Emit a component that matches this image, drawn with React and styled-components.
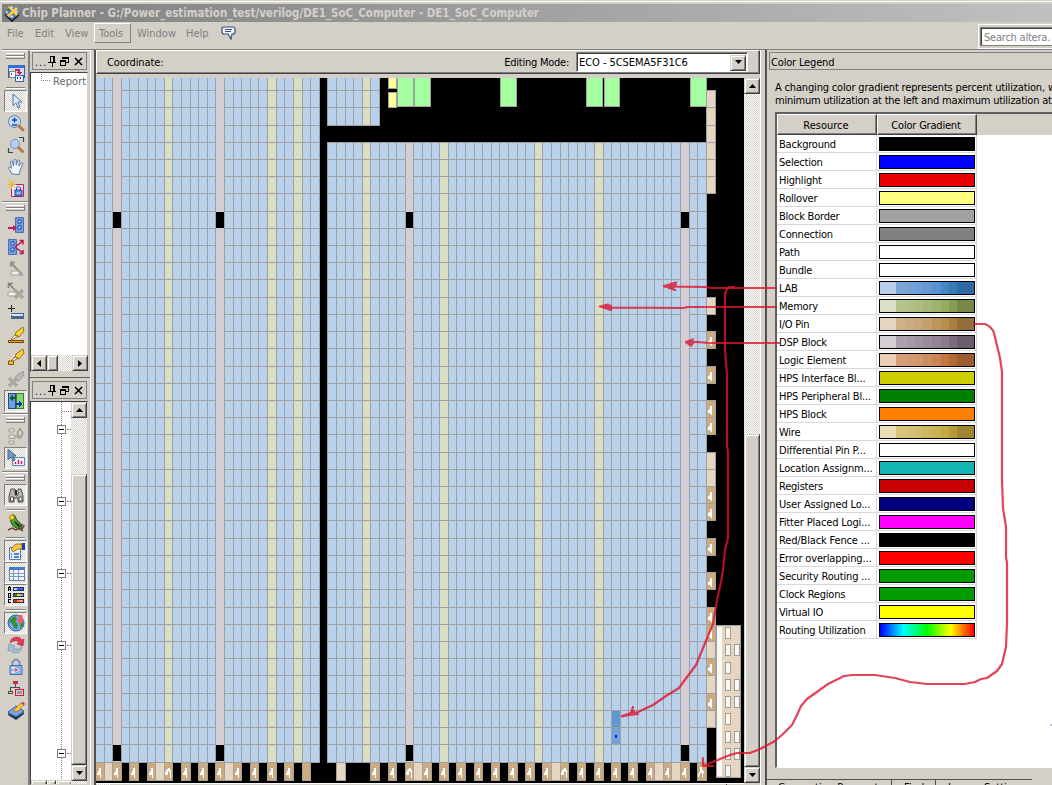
import React from "react";
import styled, { createGlobalStyle, css } from "styled-components";

const Global = createGlobalStyle`
  * { box-sizing: border-box; }
  body { margin: 0; background: #d4d0c8; overflow: hidden; }
`;

const FACE = "#d4d0c8";
const checker = css`
  background: conic-gradient(#fff 25%, ${FACE} 0 50%, #fff 0 75%, ${FACE} 0) 0 0 / 2px 2px;
`;
const raised = css`
  background: ${FACE};
  border: 1px solid;
  border-color: ${FACE} #404040 #404040 ${FACE};
  box-shadow: inset 1px 1px #fff, inset -1px -1px #808080;
`;

const Window = styled.div`
  position: relative;
  width: 1052px;
  height: 785px;
  overflow: hidden;
  display: flex;
  flex-direction: column;
  background: ${FACE};
  font: 11px/14px "DejaVu Sans Condensed", "DejaVu Sans", sans-serif;
  color: #000;
  white-space: nowrap;
`;
const TopEdge = styled.div`
  height: 4px;
  flex: none;
  background: linear-gradient(${FACE} 1px, #fff 1px 2px, ${FACE} 2px);
`;
const TitleBar = styled.div`
  height: 18px;
  flex: none;
  margin-left: 2px;
  padding-left: 2px;
  display: flex;
  align-items: center;
  gap: 2px;
  background: linear-gradient(90deg, #808080, #c0c0c0);
  color: ${FACE};
  font-weight: bold;
  font-size: 11.5px;
`;
const Label = styled.span`
  letter-spacing: ${(p) => p.$ls || 0}px;
  padding-top: ${(p) => p.$drop || 0}px;
  ${(p) => p.$end && "margin-left: auto;"}
`;
const MenuBar = styled.div`
  height: 27px;
  flex: none;
  display: flex;
  align-items: flex-start;
  padding: 1px 0 0 2px;
  color: #808080;
`;
const MenuItem = styled.div`
  width: ${(p) => p.$w}px;
  height: 20px;
  padding-left: 5px;
  line-height: 22px;
  ${(p) => p.$hot && css`
    border: 1px solid;
    border-color: #fff #808080 #808080 #fff;
    padding-left: 4px;
    line-height: 20px;
    margin-right: 1px;
  `}
`;
const HelpBadge = styled.div`
  padding-top: 3px;
  width: 16px;
`;
const SearchFrame = styled.div`
  margin: 1px 0 0 auto;
  width: 74px;
  height: 25px;
  border: 1px solid #fff;
  border-right: 0;
  padding: 2px 0 2px 1px;
`;
const SearchField = styled.div`
  height: 19px;
  background: #fff;
  border: 1px solid #808080;
  border-right: 0;
  box-shadow: inset 1px 1px #404040;
  padding-left: 3px;
  line-height: 20px;
  letter-spacing: -0.22px;
  color: #808080;
`;
const Body = styled.div`
  flex: 1;
  min-height: 0;
  display: flex;
  border-top: 1px solid #808080;
  margin-left: 2px;
`;

/* tool bar */
const ToolColumn = styled.div`
  width: 26px;
  flex: none;
  border-top: 1px solid #fff;
  display: flex;
  flex-direction: column;
`;
const ToolButton = styled.div`
  height: 22px;
  flex: none;
  display: flex;
  align-items: center;
  justify-content: center;
  padding-left: 1px;
  ${(p) => p.$on && css`
    margin: 0 1px 0 2px;
    ${checker}
    border: 1px solid;
    border-color: #808080 #fff #fff #808080;
    padding-left: 0;
  `}
  svg { display: block; }
`;
const Rule = styled.div`
  height: ${(p) => p.$h}px;
  flex: none;
  padding-top: ${(p) => p.$top}px;
  &::before {
    content: "";
    display: block;
    height: 2px;
    margin: 0 ${(p) => (p.$wide ? 0 : "3px")} 0 ${(p) => (p.$wide ? 0 : "4px")};
    background: linear-gradient(#808080 50%, #fff 50%);
  }
`;
const Grip = styled.div`
  height: ${(p) => p.$h}px;
  flex: none;
  padding: ${(p) => p.$top}px 3px 0 4px;
  &::before {
    content: "";
    display: block;
    height: 6px;
    background: linear-gradient(#fff 1px, ${FACE} 1px 2px, #808080 2px 3px, #fff 3px 4px, ${FACE} 4px 5px, #808080 5px);
    border-right: 1px solid #808080;
  }
`;

/* docks on the left */
const DockColumn = styled.div`
  width: 62px;
  flex: none;
  display: flex;
  flex-direction: column;
`;
const Dock = styled.div`
  height: ${(p) => p.$h}px;
  flex: none;
  border-left: 2px solid #808080;
  border-top: 1px solid ${(p) => (p.$line ? "#606060" : "#fff")};
  display: flex;
  flex-direction: column;
  padding-top: ${(p) => p.$pt}px;
`;
const DockTitle = styled.div`
  height: 18px;
  flex: none;
  margin: 0 3px 0 2px;
  border: 1px solid #808080;
  display: flex;
  align-items: center;
  padding-left: 2px;
  svg { display: block; }
`;
const Ellipsis = styled.span`
  width: 13px;
  padding-top: 4px;
  letter-spacing: 0.8px;
  color: #201040;
`;
const DockBox = styled.div`
  flex: 1;
  min-height: 0;
  margin: ${(p) => p.$mt}px 2px ${(p) => p.$mb}px 0;
  background: #fff;
  border: 1px solid #404040;
  border-right-color: ${FACE};
  border-bottom-color: ${FACE};
  display: flex;
  flex-direction: ${(p) => p.$dir || "column"};
`;
const ReportRow = styled.div`
  flex: 1;
  display: flex;
  padding-left: 10px;
  color: #666;
  span { margin: 2px 0 0 3px; letter-spacing: 0.1px; }
`;
const ReportBranch = styled.i`
  width: 9px;
  height: 7px;
  margin-top: 1px;
  border-left: 1px dotted #909090;
  border-bottom: 1px dotted #909090;
`;
const Tree = styled.div`
  flex: 1;
  overflow: hidden;
  display: flex;
  flex-direction: column;
`;
const TreeRow = styled.div`
  height: 18px;
  flex: none;
  display: flex;
  align-items: center;
  padding-left: ${(p) => (p.$node ? 26 : 30)}px;
  background: repeating-linear-gradient(#808080 0 1px, #fff 1px 2px) 30px 0 / 1px 100% no-repeat;
  &::after {
    content: "";
    display: ${(p) => (p.$node || p.$first ? "block" : "none")};
    width: ${(p) => (p.$first ? 9 : 4)}px;
    margin-left: 1px;
    border-top: 1px dotted #808080;
  }
`;
const Toggle = styled.i`
  width: 9px;
  height: 9px;
  border: 1px solid #808080;
  background: linear-gradient(#000, #000) 1px 3px / 5px 1px no-repeat #fff;
`;
const ScrollV = styled.div`
  width: 16px;
  flex: none;
  display: flex;
  flex-direction: column;
  ${checker}
`;
const ScrollH = styled.div`
  height: 16px;
  flex: none;
  display: flex;
  ${checker}
`;
const ScrollPiece = styled.div`
  ${raised}
  flex: none;
  width: ${(p) => (p.$w ? p.$w + "px" : "auto")};
  height: ${(p) => (p.$h ? p.$h + "px" : "auto")};
  margin-top: ${(p) => p.$mt || 0}px;
  margin-left: ${(p) => (p.$end ? "auto" : (p.$ml || 0) + "px")};
  display: flex;
  align-items: center;
  justify-content: center;
`;
const BottomScroll = styled.div`
  height: 4px;
  flex: none;
  display: flex;
  gap: 1px;
  background: #fff;
  overflow: hidden;
`;

/* centre */
const Center = styled.div`
  width: 671px;
  flex: none;
  display: flex;
  flex-direction: column;
  border: solid #fff;
  border-width: 0 1px;
  padding-left: 3px;
`;
const CenterInner = styled.div`
  flex: 1;
  min-height: 0;
  border-left: 2px solid #505050;
  display: flex;
  flex-direction: column;
`;
const CoordBar = styled.div`
  height: 24px;
  flex: none;
  width: 664px;
  border: 1px solid;
  border-color: #fff #404040 #404040 #fff;
  box-shadow: inset -1px -1px #808080;
  display: flex;
  align-items: center;
  padding-left: 10px;
`;
const Combo = styled.div`
  margin: 0 11px 0 7px;
  width: 172px;
  height: 20px;
  background: #fff;
  border: 1px solid;
  border-color: #808080 #fff #fff #808080;
  box-shadow: inset 1px 1px #404040;
  display: flex;
  align-items: center;
  padding: 1px 1px 0 2px;
`;
const MapRow = styled.div`
  margin-top: 4px;
  flex: none;
  display: flex;
  height: 705px;
  width: 664px;
  svg { display: block; }
`;
const MapBottom = styled.div`
  flex: 1;
  width: 648px;
  display: flex;
  border-top: 1px solid #fff;
  i { width: 15px; ${checker} }
  b { width: 616px; border-right: 1px solid #404040; }
`;

/* legend */
const Legend = styled.div`
  flex: 1;
  min-width: 0;
  border-left: 2px solid #505050;
  margin-left: 4px;
  padding-top: 2px;
  display: flex;
  flex-direction: column;
`;
const LegendTitle = styled.div`
  height: 18px;
  flex: none;
  margin-left: 2px;
  border: 1px solid #808080;
  border-right: 0;
  padding-left: 1px;
  line-height: 19px;
  letter-spacing: -0.17px;
`;
const LegendText = styled.div`
  margin: 11px 0 0 8px;
  line-height: 13px;
  height: 31px;
  flex: none;
`;
const LegendView = styled.div`
  height: 656px;
  flex: none;
  margin-left: 8px;
  background: #fff;
  border: solid #606060;
  border-width: 2px 0 0 2px;
  border-bottom: 1px solid #fff;
`;
const HeadRow = styled.div`
  display: flex;
  height: 21px;
  background: ${FACE};
`;
const HeadCell = styled.div`
  width: ${(p) => p.$w}px;
  padding-right: 2px;
  text-align: center;
  line-height: 21px;
  letter-spacing: ${(p) => p.$ls || 0}px;
  border: 1px solid;
  border-color: #fff #404040 #404040 #fff;
  box-shadow: inset -1px -1px #808080;
`;
const LegendRow = styled.div`
  width: 200px;
  height: 18px;
  display: flex;
  border-bottom: 1px solid #d8d8d8;
  border-right: 1px solid #d8d8d8;
`;
const NameCell = styled.div`
  width: 100px;
  padding-left: 2px;
  line-height: 19px;
  letter-spacing: ${(p) => (p.$long ? -0.15 : -0.22)}px;
  border-right: 1px solid #d8d8d8;
`;
const Swatch = styled.div`
  width: 96px;
  height: 14px;
  margin: 2px 0 0 2px;
  border: 1px solid #000;
  background: ${(p) => p.$bg};
`;
const TabStrip = styled.div`
  margin-top: 11px;
  width: 265px;
  height: 8px;
  flex: none;
  border-top: 1px solid #505050;
  display: flex;
  gap: 1px;
  overflow: hidden;
`;
const Tab = styled.div`
  width: ${(p) => p.$w}px;
  flex: none;
  border-right: 1px solid #505050;
  padding: 1px 0 0 11px;
`;
const Overlay = styled.svg`
  position: absolute;
  left: 0;
  top: 0;
  pointer-events: none;
`;

/* ---- chip map geometry ---- */
const colX = (k) => Math.floor(95.58 + 8.601 * k) - 96;
const steps18 = new Set([1, 6, 11, 15, 20, 25, 29, 34, 38]);
const rowY = [12];
for (let i = 0; i < 40; i++) rowY.push(rowY[i] + 17 + (steps18.has(i) || i === 39 ? 1 : 0));
const MEM = [8, 20, 23, 31, 40, 51, 58];
const DSP = [2, 14, 36, 68];
const PALE = [1, 7, 15, 28, 37, 53, 65, 67];
const PINS = [0, 2, 4, 6, 8, 10, 12, 14, 16, 18, 20, 22, 24, 32, 34, 36, 38, 40, 42, 44, 46, 48, 50, 52, 54, 56, 58, 60, 62, 64, 66, 68, 70];
const SIDE = { 0: 0, 1: 0, 2: 0, 3: 0, 4: 0, 5: 0, 12: 0, 14: 1, 16: 1, 18: 1, 19: 1, 21: 0, 22: 0, 23: 1, 24: 1, 26: 1, 28: 1, 30: 1, 31: 1, 32: 0, 33: 1, 34: 0, 35: 1, 36: 0 };
const PADS = [[627, 1], [644, 2], [662, 1], [679, 2], [696, 2], [713, 1], [731, 2], [748, 2], [765, 1]];
const C = { lab: "#bad1eb", mem: "#d9dfc5", dsp: "#d4cdd4", pale: "#e6d5c0", tan: "#ccab80", line: "#a0a0a0" };

function ChipMap() {
  const out = [];
  const bottom = rowY[39];
  const R = (x, y, w, h, fill, key) => out.push(<rect key={key || out.length} x={x} y={y} width={w} height={h} fill={fill} />);
  R(0, 0, 648, 705, "#000");
  for (let k = 0; k < 71; k++) {
    if (k === 26) continue;
    const x = colX(k);
    const w = colX(k + 1) - x;
    const kind = MEM.includes(k) ? "mem" : DSP.includes(k) ? "dsp" : "lab";
    const top = k < 26 ? 0 : rowY[3];
    const end = bottom + 1;
    R(x, top, w + 1, end - top, C.line);
    R(x + 1, top + (k > 26 ? 1 : 0), w - 1, bottom - top - (k > 26 ? 1 : 0), C[kind]);
    if (k > 26 && k < 33) {
      R(x, 0, w + 1, rowY[2] + 1, C.line);
      R(x + 1, 0, w - 1, rowY[2], C[kind]);
      if (kind !== "dsp") { R(x, rowY[0], w, 1, C.line); R(x, rowY[1], w, 1, C.line); }
    }
    if (kind !== "dsp") {
      rowY.slice(k < 26 ? 0 : 3, 40).forEach((y) => R(x, y, w, 1, C.line));
    } else {
      R(x + 1, rowY[7] + 1, w - 1, 16, "#000");
      R(x + 1, rowY[38] + 1, w - 1, 16, "#000");
    }
  }
  [[292, 0, 9, 11], [292, 14, 9, 16]].forEach(([x, y, w, h]) => {
    R(x, y, w, h, C.line);
    R(x + 1, y ? y + 1 : 0, w - 2, h - (y ? 2 : 1), "#ffff9c");
  });
  [[301, 17], [318, 17], [404, 17], [490, 17], [508, 16], [594, 17]].forEach(([x, w]) => {
    R(x, 0, w, 29, C.line);
    R(x + 1, 0, w - 2, 28, "#a5ff9e");
  });
  Object.entries(SIDE).forEach(([r, tan]) => {
    const y = rowY[+r];
    const h = rowY[+r + 1] - y;
    R(610, y, 10, h + 1, C.line);
    R(611, y + 1, 8, h - 1, tan ? C.tan : C.pale);
    if (tan) out.push(<path key={"s" + r} d={`M${614} ${y + 6}h2v9h-1v-1h-1v-1h-2v-3h1v-1h1z`} fill="#fff" />);
  });
  PALE.forEach((k) => {
    R(colX(k), bottom, colX(k + 1) - colX(k) + 1, 19, C.line);
    R(colX(k) + 1, bottom + 1, colX(k + 1) - colX(k) - 1, 17, C.pale);
  });
  PINS.forEach((k) => {
    const x = colX(k);
    R(x, bottom, colX(k + 1) - x + 1, 19, C.line);
    R(x + 1, bottom + 1, colX(k + 1) - x - 1, 17, C.tan);
    if (k === 24) return;
    const d = [8, 36, 54].includes(k)
      ? `M${x + 3} ${bottom + 7}h1v-1h2v2h1v8h-1v-6h-1v-1h-1v4h-3v-3h1z`
      : k === 70
        ? `M${x + 3} ${bottom + 5}h2v3h1v1h1v2h-1v4h-1v-4h-2v2h-1v2h-1v-3h1v-2h1z`
        : `M${x + 4} ${bottom + 6}h2v10h-1v-3h-3v-2h1v-2h1z`;
    out.push(<path key={"p" + k} d={d} fill="#fff" />);
  });
  R(colX(60) + 1, rowY[36] + 1, 8, 16, "#6097d1");
  R(colX(60) + 1, rowY[37] + 1, 8, 16, "#72a3da");
  R(519, 657, 2, 3, "#0020ff");
  R(620, 547, 25, 153, C.line);
  R(621, 548, 23, 151, C.pale);
  R(621, 549, 5, 149, "#fbf9f6");
  PADS.forEach(([y, n]) => {
    for (let i = 0; i < n; i++) {
      R(629 + i * 9, y - 78, 6, 12, "#a09c98");
      R(630 + i * 9, y - 77, 4, 10, "#faf6f2");
    }
  });
  return <svg width="648" height="705" shapeRendering="crispEdges">{out}</svg>;
}

/* ---- icons ---- */
const Ico = ({ children, s = 18, crisp }) => (
  <svg width={s} height={s} viewBox="0 0 18 18" fill="none" shapeRendering={crisp ? "crispEdges" : "auto"}>{children}</svg>
);
const Pencil = ({ gray }) => (
  <>
    <path d="M16 1L9 6l-1 4 4 1 5-6z" fill={gray ? "#bbb" : "#f8d040"} stroke={gray ? "#999" : "#9a7010"} />
    <path d="M8 9l-4 4 1 1 6-4z" fill={gray ? "#c8c8c8" : "#fff8c8"} stroke={gray ? "#999" : "#604000"} strokeWidth=".7" />
  </>
);
const icons = {
  locate: <Ico crisp><path d="M1 1h16v12H1z" fill="#c8dcf8" stroke="#3860b0" /><path d="M1 1h16v3H1z" fill="#3870d0" /><path d="M2 7h6v6H2z" fill="#fff" stroke="#888" /><path d="M8 11h8v6H8z" fill="#e8f0ff" stroke="#4060a0" /><path d="M8 5h5v3h3l-4 3-3-3h2V7H8z" fill="#d0204c" /><path d="M4 9h1v2H4zM10 13h1v2h-1zM13 13h1v2h-1z" fill="#205080" /></Ico>,
  pointer: <Ico><path d="M6 2v12l3-3 2 5 2-1-2-5h4z" fill="#dce8fa" stroke="#5070a0" /></Ico>,
  zoom: <Ico><circle cx="7.5" cy="7.5" r="6" fill="#c4dcf8" stroke="#6080b0" /><path d="M12 12l4 4" stroke="#b87840" strokeWidth="3" strokeLinecap="round" /><path d="M5 6h5M7.500 3.500v5M5 11h5" stroke="#1848a0" strokeWidth="1.300" /></Ico>,
  fit: <Ico><circle cx="8" cy="8" r="4.500" fill="#b4d0f4" stroke="#7090b8" /><path d="M11.500 11.500l4 4" stroke="#b87840" strokeWidth="3" strokeLinecap="round" /><path d="M12 1.500h4.500V6M1.500 12v4.500H6" stroke="#304860" strokeWidth="1.200" /></Ico>,
  hand: <Ico><path d="M5 16L1.500 10c0-1.500 1.500-1.500 3 .5L3.500 4c.2-1.500 1.600-1.300 2 0L6.500 8 7 2c.5-1.300 2-1.200 2.200 0v5l1.500-4.500c.6-1 1.900-.7 1.800.5L11.800 8l2.400-3c1-.8 2 0 1.500 1L13 13l-1 3.500z" fill="#f0f5ff" stroke="#6078a8" /></Ico>,
  newLock: <Ico><path d="M4.500 4.500h12v12h-12z" fill="#e8dff2" stroke="#d01850" /><path d="M8 10h7v6H8z" fill="#5888d8" stroke="#2850a0" /><path d="M9.500 10V7.500q2-2 4 0V10" stroke="#2850a0" /><path d="M9.500 13h4" stroke="#e8eefc" /><path d="M4.500 0v9M0 4.500h9M1 1l7 7M8 1L1 8" stroke="#f0b818" strokeWidth=".9" /></Ico>,
  fanin: <Ico><path d="M8.500 1.500h8v15h-8z" fill="#6c9ce4" stroke="#5070b0" /><path d="M11 4h3v3h-3zM11 10h3v3h-3z" fill="#d8e8ff" stroke="#1840a0" /><path d="M1 12h6" stroke="#c8184c" strokeWidth="2" /><path d="M6 9l4 3-4 3z" fill="#c8184c" /></Ico>,
  fanout: <Ico><path d="M1.500 1.500h8v15h-8z" fill="#6c9ce4" stroke="#5070b0" /><path d="M4 4h3v3H4zM4 10h3v3H4z" fill="#d8e8ff" stroke="#1840a0" /><path d="M8 9l8-6M8 9l8 6M12.500 2.500H16v4M12.500 15.500H16V12" stroke="#b8184c" strokeWidth="1.500" /></Ico>,
  grayArrow: <Ico><path d="M4 3l11 11M4 6.500V2.500H8" stroke="#909088" strokeWidth="1.800" /><path d="M4 11h9v4H4z" fill="#f0f0ec" stroke="#a0a098" /><path d="M11 9l6 7h-5z" fill="#a8a8a0" /></Ico>,
  grayCut: <Ico><path d="M2 2l8 8M1.500 6V1.500H6" stroke="#808078" strokeWidth="1.500" /><path d="M1 10h8v4H1z" fill="#f0f0ec" stroke="#a0a098" /><path d="M8 8l8 8M16 8l-8 8" stroke="#a8a8a0" strokeWidth="3.500" /></Ico>,
  add: <Ico crisp><path d="M1 4.500h7M4.500 1v7" stroke="#202830" /><path d="M4 9h13v6H4z" fill="#486890" /><path d="M4 10h12v2H5z" fill="#d4e4f4" /></Ico>,
  pencilLine: <Ico><Pencil /><path d="M1.500 14.500h15v2h-15z" fill="#f0b020" stroke="#704000" /></Ico>,
  pencilBox: <Ico><Pencil /><path d="M1.500 13h5v3.500h-5z" fill="#f8c830" stroke="#805000" /></Ico>,
  pencilGray: <Ico><Pencil gray /><path d="M2 8l8 8M10 8l-8 8" stroke="#a8a8a0" strokeWidth="3.500" /></Ico>,
  swap: <Ico crisp><path d="M1.500 1.500h7v15h-7z" fill="#68a0ec" stroke="#304880" /><path d="M9.500 1.500h7v15h-7z" fill="#90d078" stroke="#308030" /><path d="M2 6l4-3v2h3v2H6v2z" fill="#086020" /><path d="M16 12l-4-3v2H9v2h3v2z" fill="#1030b0" /></Ico>,
  grayBlocks: <Ico><path d="M2 2h5v3H2zM2 8h6v3.500H2zM2 14h5v3H2zM7 9.500h3" stroke="#a0a098" fill="#e0e0dc" /><path d="M13 1l3 5-2 5h-3l-1-5z" fill="#b0b0a8" stroke="#909088" /><path d="M13 4v4" stroke="#fff" /></Ico>,
  chart: <Ico><path d="M5.500 8.500h12v8h-12z" fill="#e8f0ff" stroke="#6888b8" /><path d="M8.500 13v2M11.500 11v4M14.500 12v3" stroke="#d01850" strokeWidth="1.400" /><path d="M1 0v11l3-3 2 4 2-1-2-4h3z" fill="#7098c8" stroke="#486890" /></Ico>,
  binoc: <Ico><path d="M4 3h4v5l1 2h1l1-2V3h3l2 7v6h-5v-4H7v4H2v-6z" fill="#b8b8b0" stroke="#505050" /><path d="M3.500 11h3v4h-3zM12 11h3v4h-3z" fill="#f0f0ec" stroke="#505050" /><path d="M8 4h2v5H8z" fill="#303030" /></Ico>,
  parrot: <Ico><path d="M3 3q1-3 4-2 2 1 2 4l5 5 1 6-4-1-5-3-2-4z" fill="#50a030" stroke="#205020" /><path d="M2 4q1-4 4-3 2 1 1 4-3 2-4 0z" fill="#f8d020" stroke="#907010" strokeWidth=".6" /><path d="M8 8l5 5" stroke="#104018" strokeWidth="2" /><path d="M1 16l4-2 4 2 3-2 4 3M13 10l4 2-2 3" stroke="#704838" strokeWidth="1.500" /></Ico>,
  props: <Ico><path d="M2.500 5.500h11v12h-11z" fill="#e8f2ff" stroke="#5078b8" /><path d="M7 12h5M7 15h5M4 12h1M4 15h1" stroke="#2858c0" strokeWidth="1.300" /><path d="M4 7l5-5h6v5h-4l-5 3z" fill="#f4c840" stroke="#906000" strokeWidth=".8" /><path d="M15 1h3v7h-3z" fill="#1840c0" /></Ico>,
  table: <Ico crisp><path d="M2 3h15v13H2z" fill="#f4f8ff" stroke="#6880a8" /><path d="M2 3h15v3H2z" fill="#4878c8" /><path d="M2 9h15M2 12h15M6 6v10M11 6v10" stroke="#7898c8" /></Ico>,
  legend: <Ico crisp><path d="M1.500 5V2l1-1 1 1v3M1.500 3.500h2M1.500 7h2v4h-2zM4 13.500H1.500v3H4" stroke="#000" /><path d="M6.500 1.500h10v3h-10z" fill="#3868d0" stroke="#203060" /><path d="M7 2h3v2H7z" fill="#b8d0f8" /><path d="M6.500 7.500h10v3h-10z" fill="#e8e040" stroke="#303030" /><path d="M7 8h3v2H7z" fill="#308020" /><path d="M13 8h3v2h-3z" fill="#b090e0" /><path d="M6.500 13.500h10v3h-10z" fill="#f09030" stroke="#303030" /><path d="M7 14h3v2H7z" fill="#e02020" /><path d="M13 14h3v2h-3z" fill="#f4a0b0" /></Ico>,
  globe: <Ico><circle cx="9" cy="9" r="8" fill="#70a4ec" stroke="#3060a8" /><path d="M3 5l5-3 2 3-2 3 3 2-1 5-3-1-2-5-3-1zM13 9l3-1v4l-3 2z" fill="#389030" /><path d="M11.500 1h4v5h2L13.500 10l-4-4h2z" fill="#f06060" /></Ico>,
  refresh: <Ico><path d="M3 7q1-6 7-6 3 0 5 3l2-1-1 7-6-2 2-2q-4-3-9 1z" fill="#e03858" stroke="#a82848" strokeWidth=".6" /><path d="M15 11q-1 6-7 6-3 0-5-3l-2 1 1-7 6 2-2 2q4 3 9-1z" fill="#a4bcd8" stroke="#6888a8" strokeWidth=".6" /></Ico>,
  lock: <Ico><path d="M5.500 8V4q3.500-5 7 0v4" stroke="#7890b8" strokeWidth="1.800" /><path d="M3 7.500h12v9H3z" fill="#8cb4ec" stroke="#4870b0" /><path d="M4 10h4M4 14h4" stroke="#fff" /><path d="M6 9l6 3-6 3 2-3z" stroke="#fff" strokeWidth=".8" fill="#c81848" /></Ico>,
  hier: <Ico crisp><path d="M8.500 4v3M3.500 11V7.500h9V9" stroke="#405060" /><path d="M6 1h5v3H6z" fill="#d02850" /><path d="M1 11h5v3H1z" fill="#405040" /><path d="M2 12h3v1H2z" fill="#e8e070" /><path d="M8.500 9.500h8v6h-8z" stroke="#e01040" /><path d="M10 11h5v3h-5z" fill="#88a0b0" /></Ico>,
  chipEdit: <Ico><path d="M1 10l8-6 8 5-8 6z" fill="#78a4e4" stroke="#3860a8" /><path d="M1 11l8 4 8-5v2l-8 6-8-5z" fill="#203858" /><path d="M7 10l1-3 6-6 3 2-6 6z" fill="#f8c830" stroke="#b07010" strokeWidth=".7" /><path d="M14 1l2-1 2 2-1 1z" fill="#d02850" /></Ico>,
};
const Pin = () => <svg width="8" height="11" shapeRendering="crispEdges"><path d="M2.500 0.500h3v6h-3zM5 0h1v6H5z" fill="none" stroke="#000" /><path d="M0 6.500h8M4.500 7v4" stroke="#000" /></svg>;
const Restore = () => <svg width="9" height="9" shapeRendering="crispEdges"><path d="M2.500 2V.5h6v5H6M.5 3.500h5v5h-5zM.5 4.500h5M2.500 1.500h6" fill="none" stroke="#000" /></svg>;
const Close = () => <svg width="9" height="9"><path d="M1 1l7 7M8 1L1 8" stroke="#000" strokeWidth="1.500" /></svg>;
const Arrow = ({ d }) => {
  const p = { up: "M0 4h7L3.500 0z", down: "M0 0h7L3.500 4z", left: "M4 0v7L0 3.500z", right: "M0 0v7l4-3.500z" }[d];
  return <svg width="7" height="7" viewBox={d === "up" || d === "down" ? "0 -1 7 7" : "-1 0 7 7"}><path d={p} /></svg>;
};
const DockHead = () => (
  <DockTitle>
    <Ellipsis>...</Ellipsis><Pin /><svg width="4" height="1" /><Restore /><svg width="5" height="1" /><Close />
  </DockTitle>
);
const AppIcon = () => (
  <svg width="16" height="17" viewBox="0 0 16 17"><path d="M0 8l8-7 8 7-8 8z" fill="#506898" /><path d="M0 9l8 7 8-7-8 8z" fill="#101820" /><path d="M4 2l8 9 2-2L6 1zM12 2L2 11l2 2L14 4z" fill="#f8d040" /><path d="M2 6.500l2 1.500M11 5.500l3 2M6.500 12l3-1M7 2l2 1" stroke="#c8d8f8" strokeWidth="2" /><path d="M1 10l7 6 7-6" stroke="#182030" strokeWidth="1.500" fill="none" /></svg>
);
const Bubble = () => (
  <svg width="15" height="14" viewBox="0 0 15 14"><path d="M3 1h9q2 0 2 2v3q0 2-2 2h-1l-1 5-3-5H3Q1 8 1 6V3q0-2 2-2z" fill="#f4f8ff" stroke="#305078" strokeWidth="1.200" /><path d="M4 3.500h7M4 5.500h6" stroke="#305078" /></svg>
);

const shades = (c) => {
  const w = [16, 11, 8, 8, 9, 9, 8, 8, 17];
  let x = 0;
  return `linear-gradient(90deg, ${c.map((v, i) => { const s = x; x += w[i]; return `${v} ${s}px ${x}px`; }).join(", ")})`;
};
const rows = [
  ["Background", "#000"], ["Selection", "#00f"], ["Highlight", "#e60000"], ["Rollover", "#ffff80"],
  ["Block Border", "#a0a0a0"], ["Connection", "#808080"], ["Path", "#fff"], ["Bundle", "#fff"],
  ["LAB", shades(["#b9d0ec", "#7ba7d8", "#74a3d9", "#6c9fd7", "#6499d2", "#5a93cf", "#4586c9", "#3778b9", "#2f69a3"])],
  ["Memory", shades(["#d9e0c5", "#b5c48d", "#b0c087", "#adbc80", "#a6b878", "#a0b270", "#96ab60", "#879b52", "#778748"])],
  ["I/O Pin", shades(["#e6d5be", "#cfb088", "#ccab80", "#c9a678", "#c5a06d", "#bf975e", "#b98e50", "#ab7d40", "#956d3d"])],
  ["DSP Block", shades(["#d4cdd4", "#aca0ae", "#a69aa8", "#a093a2", "#998b9b", "#918394", "#897a8b", "#7b6c7d", "#6b5d6d"])],
  ["Logic Element", shades(["#ebcfba", "#d89e7a", "#d59a73", "#d3956c", "#ce8c60", "#c98355", "#c47542", "#b46838", "#9d5c30"])],
  ["HPS Interface Bl...", "#cccc00"], ["HPS Peripheral Bl...", "#008000"], ["HPS Block", "#ff8000"],
  ["Wire", shades(["#eaddb8", "#d6c37c", "#d4c176", "#d0bc6b", "#ccb75f", "#c9b252", "#c4aa40", "#b59b36", "#a0862f"])],
  ["Differential Pin P...", "#fff"], ["Location Assignm...", "#14b4b4"], ["Registers", "#c80000"],
  ["User Assigned Lo...", "#000080"], ["Fitter Placed Logi...", "#f0f"], ["Red/Black Fence ...", "#000"],
  ["Error overlapping...", "#f00"], ["Security Routing ...", "#009b00"], ["Clock Regions", "#009b00"],
  ["Virtual IO", "#ff0"],
  ["Routing Utilization", "linear-gradient(90deg, #00f, #0ff 25%, #0f0 50%, #ff0 75%, #f00)"],
];
const treeNodes = [1, 5, 9, 13, 19];

export default function App() {
  const T = (n, on) => <ToolButton $on={on}>{icons[n]}</ToolButton>;
  return (
    <Window>
      <Global />
      <TopEdge />
      <TitleBar>
        <AppIcon />
        <Label $ls={-0.03}>Chip Planner - G:/Power_estimation_test/verilog/DE1_SoC_Computer - DE1_SoC_Computer</Label>
      </TitleBar>
      <MenuBar>
        <MenuItem $w={28}>File</MenuItem>
        <MenuItem $w={30}>Edit</MenuItem>
        <MenuItem $w={34}>View</MenuItem>
        <MenuItem $w={37} $hot>Tools</MenuItem>
        <MenuItem $w={49}>Window</MenuItem>
        <MenuItem $w={40}>Help</MenuItem>
        <HelpBadge><Bubble /></HelpBadge>
        <SearchFrame><SearchField>Search altera.</SearchField></SearchFrame>
      </MenuBar>
      <Body>
        <ToolColumn>
          <Grip $h={11} $top={2} />
          {T("locate")}
          <Rule $h={6} $top={3} />
          {T("pointer", true)}{T("zoom")}{T("fit")}{T("hand")}{T("newLock")}
          <Rule $h={5} $top={1} $wide />
          <Grip $h={9} $top={0} />
          {T("fanin")}{T("fanout")}{T("grayArrow")}{T("grayCut")}{T("add")}{T("pencilLine")}{T("pencilBox")}{T("pencilGray")}{T("swap", true)}
          <Rule $h={5} $top={1} $wide />
          <Grip $h={8} $top={0} />
          {T("grayBlocks")}{T("chart", true)}
          <Rule $h={6} $top={2} $wide />
          <Grip $h={9} $top={0} />
          {T("binoc", true)}
          <Rule $h={6} $top={3} />
          {T("parrot")}
          <Rule $h={6} $top={3} />
          {T("props", true)}{T("table", true)}{T("legend", true)}
          <Rule $h={6} $top={3} />
          {T("globe", true)}{T("refresh")}{T("lock")}{T("hier")}{T("chipEdit")}
        </ToolColumn>
        <DockColumn>
          <Dock $h={327} $pt={1}>
            <DockHead />
            <DockBox $mt={2} $mb={5}>
              <ReportRow><ReportBranch /><span>Report</span></ReportRow>
              <ScrollH>
                <ScrollPiece $w={16}><Arrow d="left" /></ScrollPiece>
                <ScrollPiece $w={11} />
                <ScrollPiece $w={16} $ml={14}><Arrow d="right" /></ScrollPiece>
              </ScrollH>
            </DockBox>
          </Dock>
          <Dock $h={408} $pt={3} $line>
            <DockHead />
            <DockBox $mt={2} $mb={0} $dir="row">
              <Tree>
                {Array.from({ length: 21 }, (_, i) => (
                  <TreeRow key={i} $first={i === 0} $node={treeNodes.includes(i)}>
                    {treeNodes.includes(i) && <Toggle />}
                  </TreeRow>
                ))}
                <BottomScroll>
                  <ScrollPiece $w={16} $h={16} /><ScrollPiece $w={8} $h={16} /><ScrollPiece $w={15} $h={16} />
                </BottomScroll>
              </Tree>
              <ScrollV>
                <ScrollPiece $h={16}><Arrow d="up" /></ScrollPiece>
                <ScrollPiece $h={291} $mt={56} />
                <ScrollPiece $h={16}><Arrow d="down" /></ScrollPiece>
              </ScrollV>
            </DockBox>
          </Dock>
        </DockColumn>
        <Center>
          <CenterInner>
            <CoordBar>
              <Label $ls={-0.1} $drop={1}>Coordinate:</Label>
              <Label $ls={-0.25} $drop={1} $end>Editing Mode:</Label>
              <Combo>
                <Label $ls={-0.05}>ECO - 5CSEMA5F31C6</Label>
                <ScrollPiece $w={16} $h={16} $end><Arrow d="down" /></ScrollPiece>
              </Combo>
            </CoordBar>
            <MapRow>
              <ChipMap />
              <ScrollV>
                <ScrollPiece $h={16}><Arrow d="up" /></ScrollPiece>
                <ScrollPiece $h={333} $mt={340} />
                <ScrollPiece $h={16}><Arrow d="down" /></ScrollPiece>
              </ScrollV>
            </MapRow>
            <MapBottom><i /><b /></MapBottom>
          </CenterInner>
        </Center>
        <Legend>
          <LegendTitle>Color Legend</LegendTitle>
          <LegendText>
            <Label $ls={-0.17}>A changing color gradient represents percent utilization, w</Label><br />
            <Label $ls={-0.23}>minimum utilization at the left and maximum utilization at th</Label>
          </LegendText>
          <LegendView>
            <HeadRow>
              <HeadCell $w={100}>Resource</HeadCell>
              <HeadCell $w={100} $ls={-0.2}>Color Gradient</HeadCell>
            </HeadRow>
            {rows.map(([name, bg]) => (
              <LegendRow key={name}>
                <NameCell $long={name.endsWith("...")}>{name}</NameCell>
                <Swatch $bg={bg} />
              </LegendRow>
            ))}
          </LegendView>
          <TabStrip>
            <Tab $w={125}>Connection Parameters</Tab>
            <Tab $w={43}>Find</Tab>
            <Tab $w={120}>Layers Settings</Tab>
          </TabStrip>
        </Legend>
      </Body>
      <Overlay width="1052" height="785" fill="none" stroke="#dc1432" strokeOpacity=".8" strokeWidth="2.200" strokeLinejoin="round" strokeLinecap="round">
        <path d="M776 288H711L706 287L664 286.500M676 282.500L664 286L675 290M676 284.500L664 286.500L673 288" />
        <path d="M776 307H688L683 308L612 307.500L600 306.500M608 304.500L600 306.500L611 310M602 307L611 305.500M602 307L611 308.500" />
        <path d="M779 343H710L697 342L687 342M693 339.500L686 342L691 345.500L694 342M690 341V344" />
        <path d="M734 287H729Q726 289 725 295V350L727 375V446L728 452V538L725 550L723 570L721 582L717 600L713 624L696 665L687 677L679 688L666 696L653 705L638 712L622 716.500M633 707L631 713L622 716L638 714M626 715.500L634 711" />
        <path d="M974 324H985Q992 327 994 333L1000 358L1002 372V480L1003 508L1006 527V557L1007 563V623L1006 647L1002 664L997 671L987 678L981 679L975 682L965 684H927L910 682L895 678L875 675H852L844 676L828 684L807 699L801 706L797 715L792 725L783 734L775 741L760 749L750 753H737L730 755L703 766M703 758V766H713" />
        <path d="M1051 725h1" stroke="#2020a0" strokeWidth="1" />
      </Overlay>
    </Window>
  );
}
